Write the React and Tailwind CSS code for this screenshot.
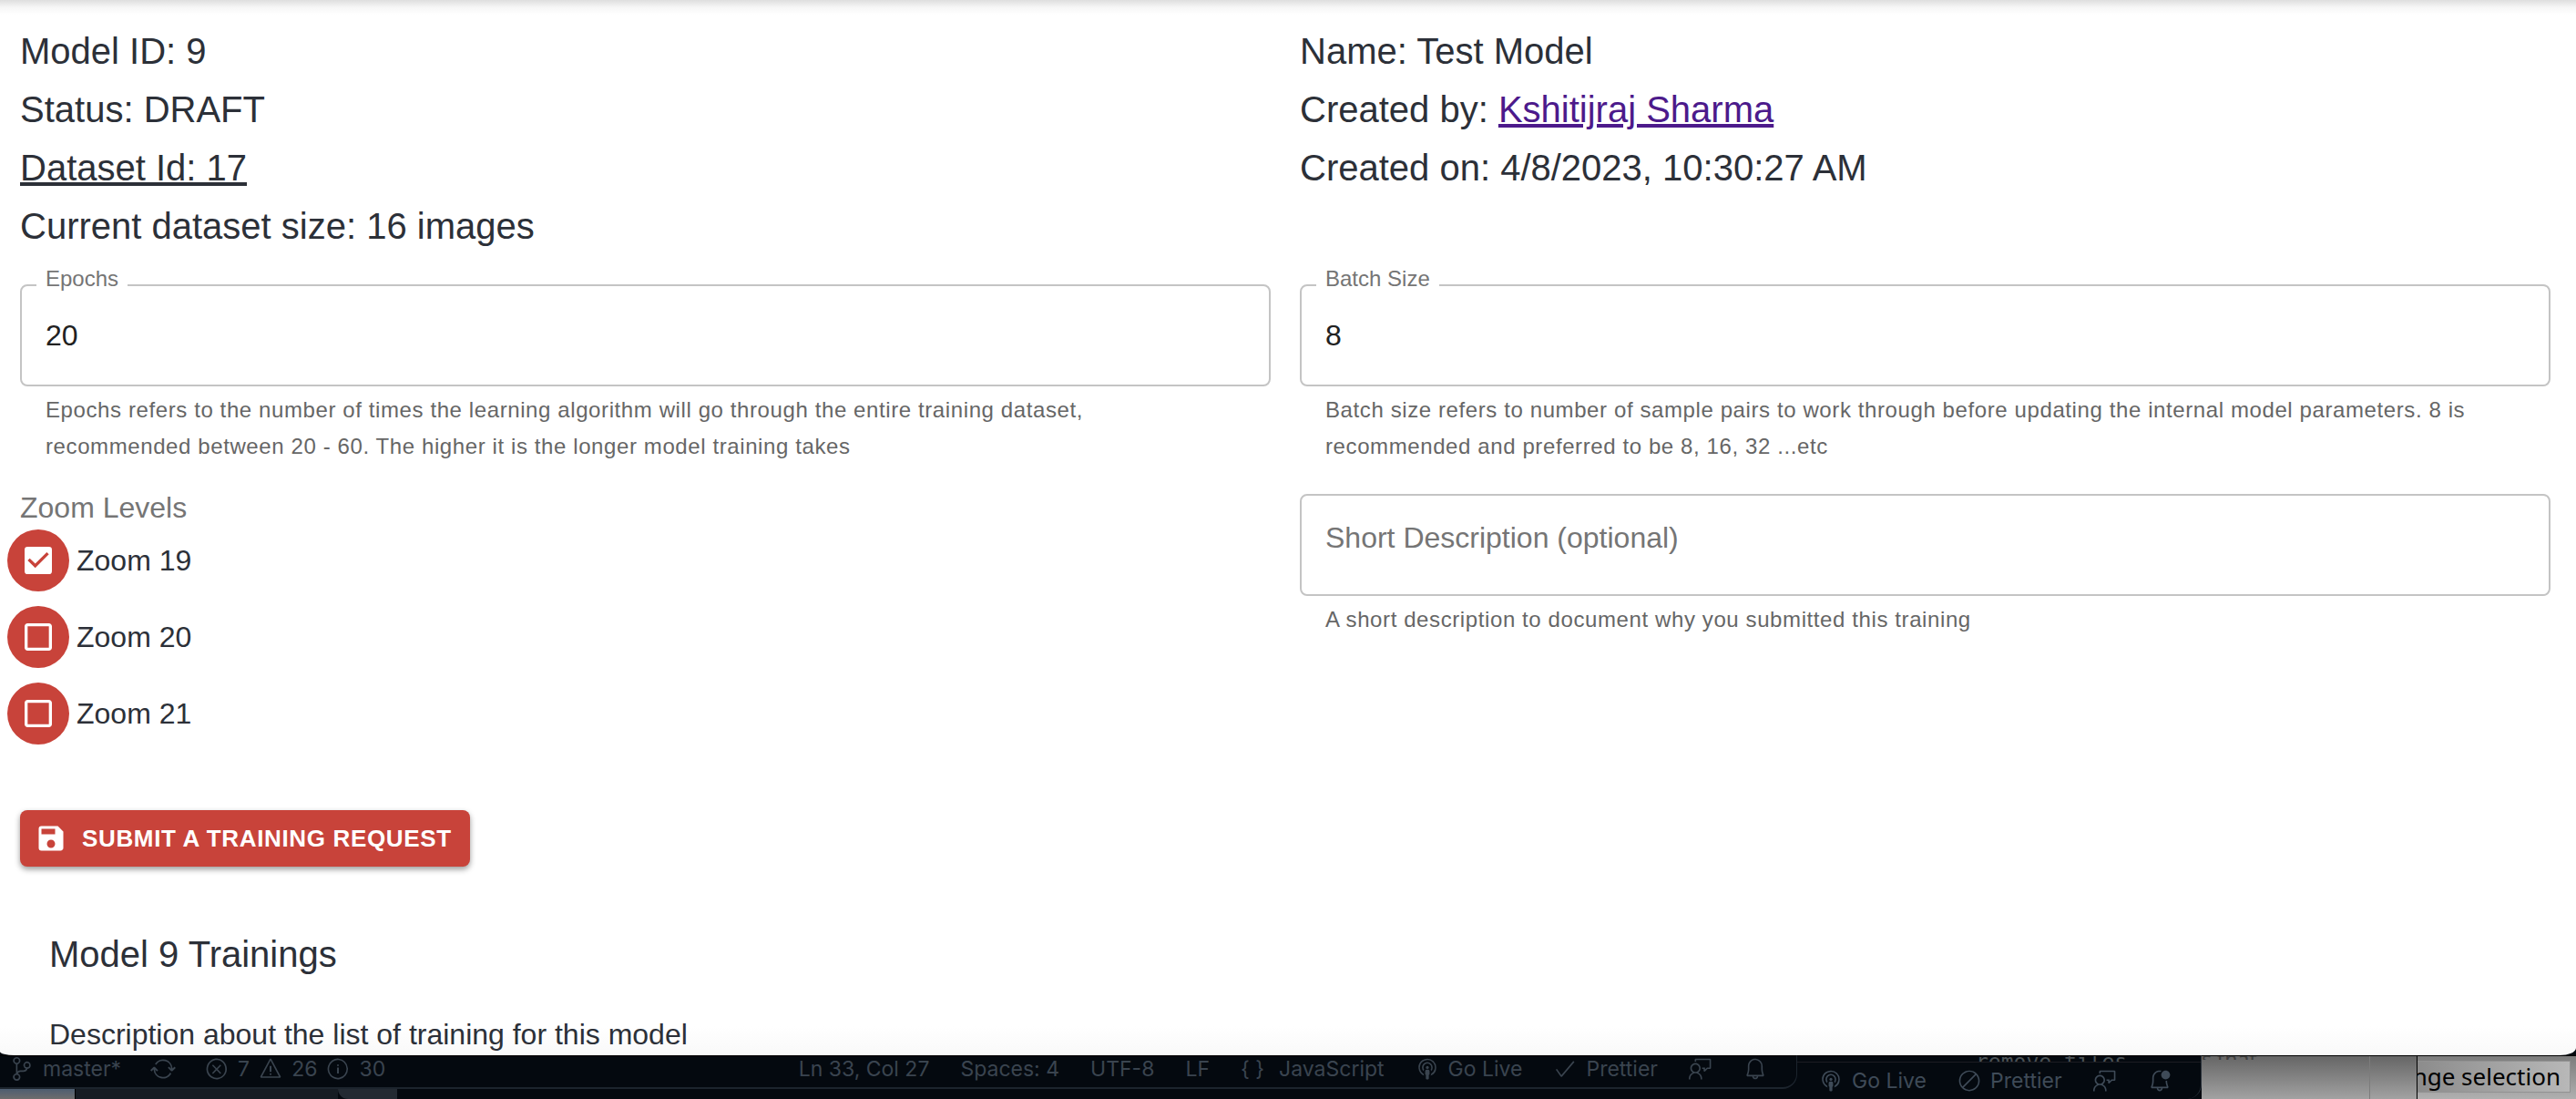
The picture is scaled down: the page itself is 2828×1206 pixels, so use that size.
import { useId, useState } from "react";
import { MdCheckBox, MdCheckBoxOutlineBlank, MdSave } from "react-icons/md";
import {
  VscBell,
  VscBellDot,
  VscBroadcast,
  VscCheck,
  VscCircleSlash,
  VscError,
  VscFeedback,
  VscInfo,
  VscSourceControl,
  VscSync,
  VscWarning,
} from "react-icons/vsc";

function Field({ label, helper, ...inputProps }) {
  const id = useId();
  return (
    <div className="relative">
      {label && (
        <label
          htmlFor={id}
          className="absolute -top-6 left-[18px] bg-white px-[10px] text-[24px] leading-[36px] text-[#757575]"
        >
          {label}
        </label>
      )}
      <input
        id={id}
        type="text"
        className="block h-28 w-full rounded-lg border-2 border-[#c4c4c4] bg-transparent px-[26px] text-[32px] text-[#212121] outline-none placeholder:-translate-y-2 placeholder:text-[#757575] placeholder:opacity-100 focus:border-[#c8433a]"
        {...inputProps}
      />
      <p className="mt-[6px] mr-16 ml-7 text-[24px] leading-10 tracking-wide text-[#666666]">{helper}</p>
    </div>
  );
}

function ZoomOption({ label, initial }) {
  const [checked, setChecked] = useState(initial);
  const Icon = checked ? MdCheckBox : MdCheckBoxOutlineBlank;
  return (
    <label className="flex w-fit items-center gap-2 text-[32px] leading-[48px]">
      <span className="grid size-[68px] place-items-center">
        <input
          type="checkbox"
          checked={checked}
          onChange={(e) => setChecked(e.target.checked)}
          className="col-start-1 row-start-1 size-[68px] appearance-none rounded-full bg-[#c8433a]"
        />
        <Icon className="pointer-events-none col-start-1 row-start-1 size-10 text-white" />
      </span>
      {label}
    </label>
  );
}

function StatusItem({ icon: Icon, children }) {
  return (
    <span className="flex items-center gap-[10px] whitespace-nowrap">
      {Icon && <Icon className="size-[26px]" />}
      {children}
    </span>
  );
}

export default function App() {
  return (
    <div className="flex h-screen flex-col overflow-hidden bg-[#04090f] font-['Liberation_Sans',Arial,sans-serif] text-[#2c3038]">
      <main className="flex min-h-0 flex-1 flex-col overflow-hidden rounded-br-[18px_8px] rounded-bl-[16px_4px] bg-white bg-linear-to-t from-[#f9f9f9] to-white to-[32px]">
        <div className="h-4 shrink-0 bg-linear-to-b from-[#dedede] via-[#f6f6f6] to-white" />
        <div className="grid shrink-0 grid-cols-2 gap-x-8 pt-2 pr-7 pl-[22px]">
          <div className="text-[40px] leading-[64px]">
            <p>Model ID: 9</p>
            <p>Status: DRAFT</p>
            <p>
              <a href="#dataset" className="underline decoration-4 underline-offset-2">
                Dataset Id: 17
              </a>
            </p>
            <p>Current dataset size: 16 images</p>
          </div>
          <div className="text-[40px] leading-[64px]">
            <p>Name: Test Model</p>
            <p>
              Created by:{" "}
              <a href="#user" className="text-[#4c1a8b] underline decoration-4 underline-offset-2">
                Kshitijraj Sharma
              </a>
            </p>
            <p>Created on: 4/8/2023, 10:30:27 AM</p>
          </div>
          <div className="pt-8">
            <Field
              label="Epochs"
              defaultValue="20"
              helper="Epochs refers to the number of times the learning algorithm will go through the entire training dataset, recommended between 20 - 60. The higher it is the longer model training takes"
            />
          </div>
          <div className="pt-8">
            <Field
              label="Batch Size"
              defaultValue="8"
              helper="Batch size refers to number of sample pairs to work through before updating the internal model parameters. 8 is recommended and preferred to be 8, 16, 32 ...etc"
            />
          </div>
          <fieldset>
            <legend className="pt-6 text-[32px] leading-[47px] text-[#757575]">Zoom Levels</legend>
            <div className="-ml-[14px] flex flex-col gap-4">
              <ZoomOption label="Zoom 19" initial />
              <ZoomOption label="Zoom 20" initial={false} />
              <ZoomOption label="Zoom 21" initial={false} />
            </div>
          </fieldset>
          <div className="pt-8">
            <Field
              placeholder="Short Description (optional)"
              aria-label="Short Description (optional)"
              helper="A short description to document why you submitted this training"
            />
          </div>
        </div>
        <div className="shrink-0 pt-[72px] pl-[22px]">
          <button
            type="button"
            className="flex h-[62px] items-center gap-4 rounded-lg bg-[#c8433a] pr-5 pl-4 text-[26px] font-bold tracking-wide whitespace-nowrap text-white shadow-[0_3px_6px_rgba(0,0,0,0.4)]"
          >
            <MdSave className="size-9" />
            SUBMIT A TRAINING REQUEST
          </button>
        </div>
        <section className="shrink-0 pt-16 pl-[54px]">
          <h2 className="text-[40px] leading-[64px]">Model 9 Trainings</h2>
          <p className="pt-8 text-[32px] leading-[48px]">Description about the list of training for this model</p>
        </section>
      </main>

      <footer className="grid h-12 shrink-0 grid-cols-[1973fr_444fr_237fr_174fr] overflow-hidden bg-[#04090f] font-[Inter,sans-serif] text-[23px] text-[#3a444f]">
        <div className="flex min-w-0 flex-col">
          <div className="flex h-[37px] items-start justify-between rounded-br-2xl border-t border-r border-b-2 border-t-black border-r-[#1c242d] border-b-[#1c242d] pr-8 pl-[11px] leading-[28px]">
            <div className="flex">
              <StatusItem icon={VscSourceControl}>master*</StatusItem>
              <span className="flex items-center px-8">
                <VscSync className="size-[28px]" />
              </span>
              <div className="flex gap-[10px]">
                <StatusItem icon={VscError}>7</StatusItem>
                <StatusItem icon={VscWarning}>26</StatusItem>
                <StatusItem icon={VscInfo}>30</StatusItem>
              </div>
            </div>
            <div className="flex gap-[34px] whitespace-nowrap">
              <span>Ln 33, Col 27</span>
              <span>Spaces: 4</span>
              <span>UTF-8</span>
              <span>LF</span>
              <span className="flex gap-4">
                <span>{"{ }"}</span>JavaScript
              </span>
              <StatusItem icon={VscBroadcast}>Go Live</StatusItem>
              <StatusItem icon={VscCheck}>Prettier</StatusItem>
              <StatusItem icon={VscFeedback} />
              <StatusItem icon={VscBell} />
            </div>
          </div>
          <div className="flex flex-1">
            <div className="w-[83px] border-r border-black bg-linear-to-b from-[#4d5d70] to-[#6d6d6d]" />
            <div className="w-[288px] bg-[#161c23]" />
            <div className="w-[65px] rounded-bl-xl bg-[#232a32]" />
          </div>
        </div>

        <div className="flex min-w-0 flex-col rounded-br-2xl border-t border-r border-t-black border-r-[#2a323b]">
          <div className="flex h-[7px] items-start overflow-hidden border-b border-[#1c1c22] pl-[196px] font-['DejaVu_Sans_Mono',monospace] leading-[13px] whitespace-nowrap text-[#4b5256]">
            remove tiles
          </div>
          <div className="flex flex-1 items-center justify-between pr-8 pl-6 text-[#3f4b58]">
            <StatusItem icon={VscBroadcast}>Go Live</StatusItem>
            <StatusItem icon={VscCircleSlash}>Prettier</StatusItem>
            <StatusItem icon={VscFeedback} />
            <StatusItem icon={VscBellDot} />
          </div>
        </div>

        <div className="flex min-w-0 border-t border-r border-black bg-linear-to-b from-[#666666] to-[#a2a2a2]">
          <div className="h-1 flex-1 overflow-hidden font-['Noto_Sans',sans-serif] leading-[6px] whitespace-nowrap text-[#3f3f3f]">
            s that
          </div>
          <div className="w-[52px] border-l border-[#7c7c7c]" />
        </div>

        <div className="flex min-w-0 flex-col border-t border-black bg-linear-to-b from-[#7c7c7c] to-[#b0b0b0] pt-[5px] pr-[6px]">
          <div className="flex h-[35px] items-center justify-end overflow-hidden border border-l-0 border-[#929292] bg-linear-to-r from-[#8c8c8c] to-[#b8b8b8] pr-[10px] font-['Noto_Sans',sans-serif] text-[26px] whitespace-nowrap text-black">
            nge selection
          </div>
        </div>
      </footer>
    </div>
  );
}
